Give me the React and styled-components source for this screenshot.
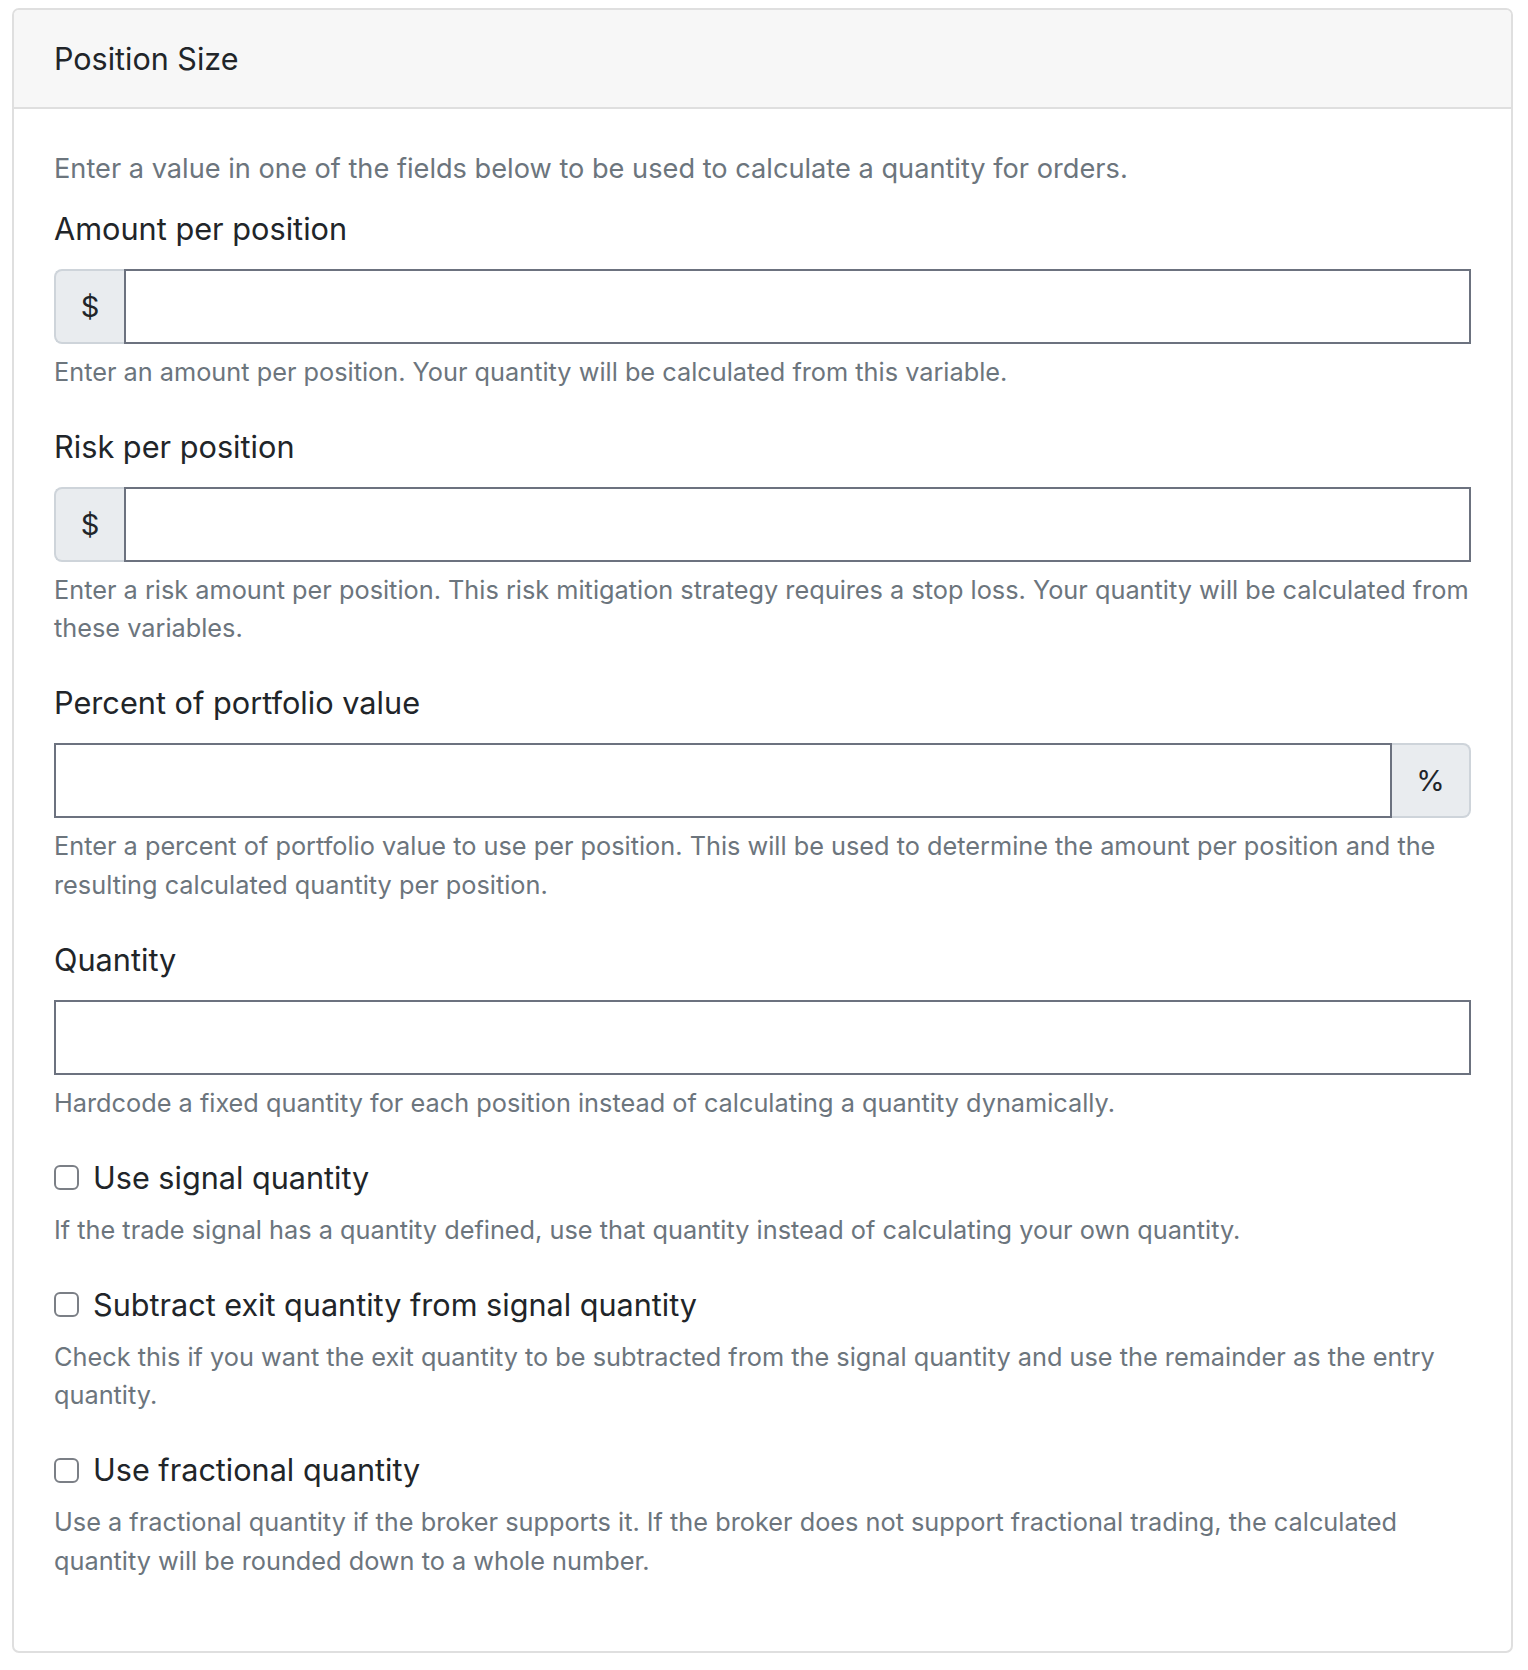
import React from "react";
import styled, { createGlobalStyle } from "styled-components";

const Global = createGlobalStyle`
  html, body { margin: 0; padding: 0; background: #fff; }
  body { font-family: Inter, "Liberation Sans", sans-serif; color: #212529; }
  * { box-sizing: border-box; }
`;

const Page = styled.div`
  padding: 8px 15px 20px 12px;
`;

const Card = styled.section`
  border: 2px solid #dfdfdf;
  border-radius: 7px;
  overflow: hidden;
`;

const CardHeader = styled.header`
  background: #f7f7f7;
  border-bottom: 2px solid #dfdfdf;
  height: 99px;
  padding: 0 40px;
  display: flex;
  align-items: center;
`;

const Title = styled.h2`
  margin: 0;
  font-size: 30.5px;
  font-weight: 400;
  color: #212529;
`;

const CardBody = styled.div`
  padding: 39px 40px 71px;
`;

const Intro = styled.p`
  margin: 0 0 17px;
  font-size: 27.2px;
  line-height: 42px;
  color: #6c757d;
`;

const Field = styled.div`
  margin-bottom: 33.3px;
  &:last-child { margin-bottom: 0; }
`;

const Label = styled.label`
  display: block;
  font-size: 30.7px;
  line-height: 44px;
  margin-bottom: 18px;
`;

const Group = styled.div`
  display: flex;
  height: 75px;
`;

const Addon = styled.span`
  flex: 0 0 ${(p) => p.$width}px;
  display: flex;
  align-items: center;
  justify-content: center;
  background: #e9ecef;
  border: 2px solid #ced4da;
  color: #212529;
  font-size: 29px;
  border-radius: ${(p) => (p.$side === "left" ? "8px 0 0 8px" : "0 8px 8px 0")};
  ${(p) => (p.$side === "left" ? "border-right: none;" : "border-left: none;")}
`;

const Input = styled.input`
  flex: 1;
  min-width: 0;
  border: 2px solid #6c727f;
  border-radius: 0;
  font: inherit;
  font-size: 29px;
  padding: 0 20px;
  outline: none;
  background: #fff;
`;

const Help = styled.div`
  margin-top: ${(p) => (p.$check ? 11 : 9)}px;
  font-size: 25.3px;
  line-height: 38.6px;
  color: #6c757d;
`;

const CheckRow = styled.label`
  display: flex;
  align-items: center;
  gap: 14px;
  font-size: 30.6px;
  line-height: 44px;
`;

const Box = styled.span`
  width: 25px;
  height: 25px;
  border: 2px solid #7b7f86;
  border-radius: 6px;
  background: #fff;
  flex: 0 0 auto;
`;

function TextField({ label, prefix, suffix, help }) {
  return (
    <Field>
      <Label>{label}</Label>
      <Group>
        {prefix && <Addon $side="left" $width={70}>{prefix}</Addon>}
        <Input type="text" />
        {suffix && <Addon $side="right" $width={79}>{suffix}</Addon>}
      </Group>
      <Help>{help}</Help>
    </Field>
  );
}

function CheckField({ label, help }) {
  return (
    <Field>
      <CheckRow>
        <Box />
        {label}
      </CheckRow>
      <Help $check>{help}</Help>
    </Field>
  );
}

export default function App() {
  return (
    <>
      <Global />
      <Page>
        <Card>
          <CardHeader>
            <Title>Position Size</Title>
          </CardHeader>
          <CardBody>
            <Intro>Enter a value in one of the fields below to be used to calculate a quantity for orders.</Intro>
            <TextField label="Amount per position" prefix="$" help="Enter an amount per position. Your quantity will be calculated from this variable." />
            <TextField label="Risk per position" prefix="$" help="Enter a risk amount per position. This risk mitigation strategy requires a stop loss. Your quantity will be calculated from these variables." />
            <TextField label="Percent of portfolio value" suffix="%" help="Enter a percent of portfolio value to use per position. This will be used to determine the amount per position and the resulting calculated quantity per position." />
            <TextField label="Quantity" help="Hardcode a fixed quantity for each position instead of calculating a quantity dynamically." />
            <CheckField label="Use signal quantity" help="If the trade signal has a quantity defined, use that quantity instead of calculating your own quantity." />
            <CheckField label="Subtract exit quantity from signal quantity" help="Check this if you want the exit quantity to be subtracted from the signal quantity and use the remainder as the entry quantity." />
            <CheckField label="Use fractional quantity" help="Use a fractional quantity if the broker supports it. If the broker does not support fractional trading, the calculated quantity will be rounded down to a whole number." />
          </CardBody>
        </Card>
      </Page>
    </>
  );
}
